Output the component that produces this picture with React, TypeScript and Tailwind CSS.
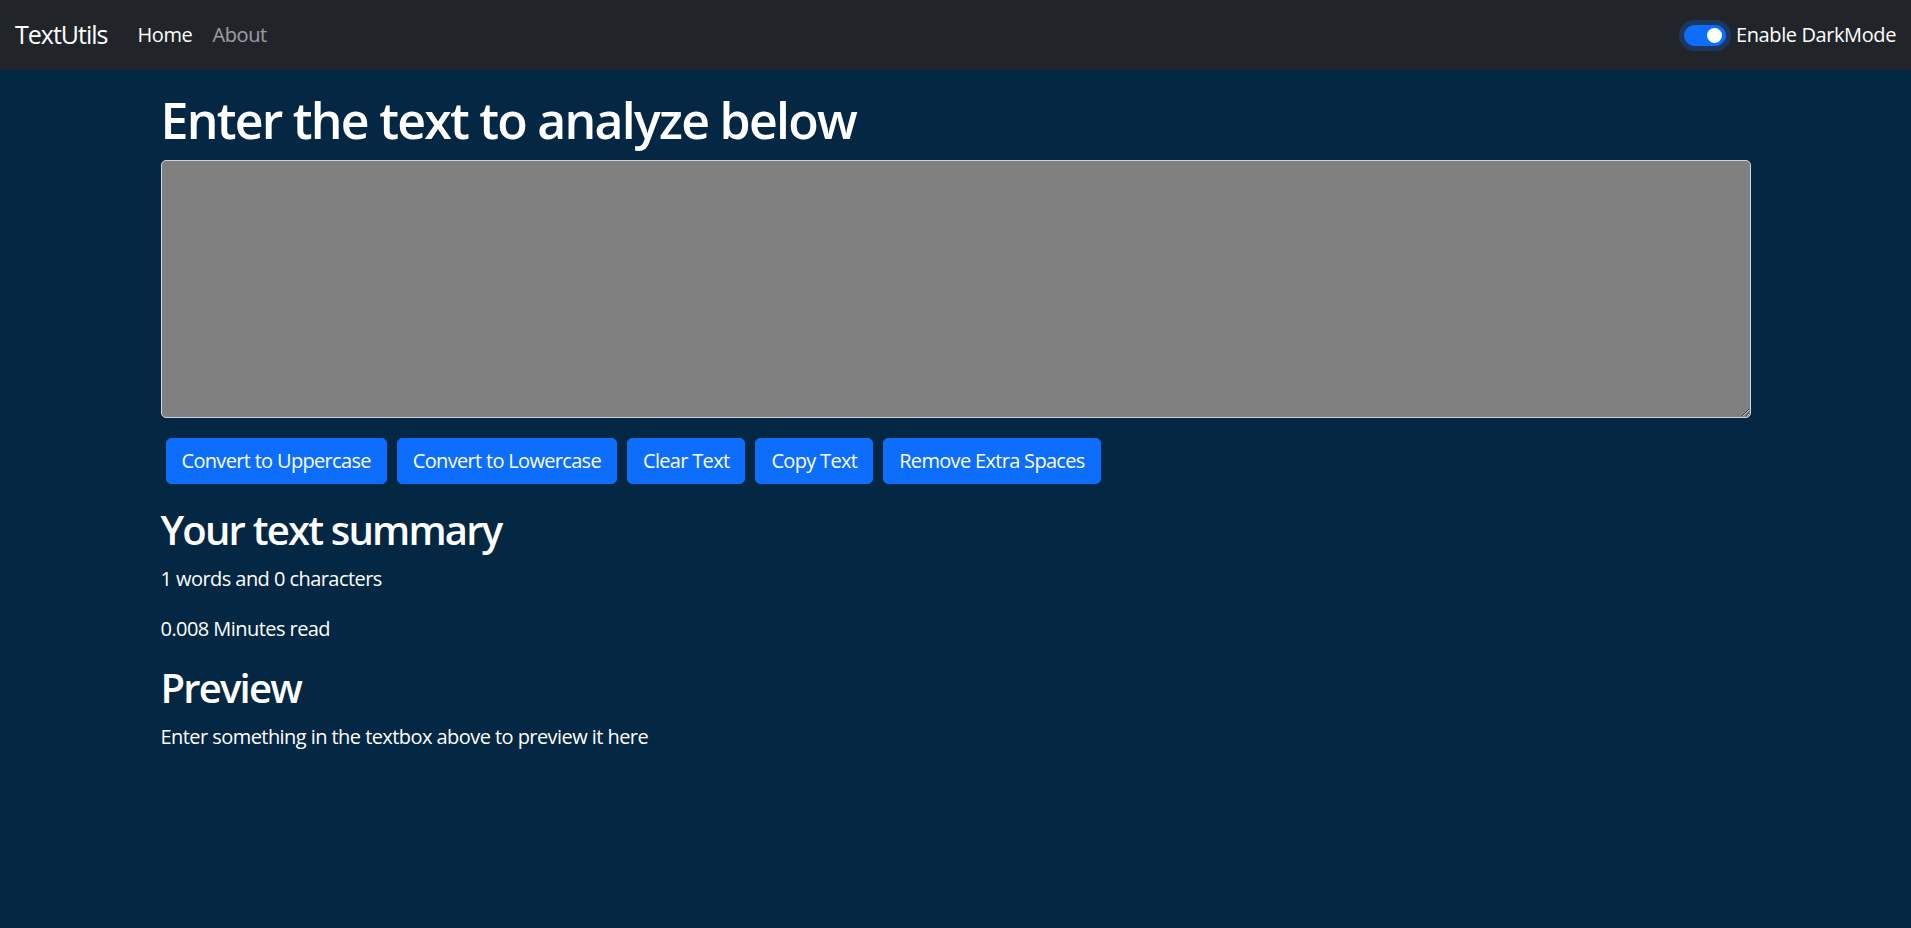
import React, { useState } from 'react';

const buttons = ['Convert to Uppercase', 'Convert to Lowercase', 'Clear Text', 'Copy Text', 'Remove Extra Spaces'];

export default function App() {
  const [text, setText] = useState('');

  const words = text.split(' ').length;

  return (
    <div className="min-h-screen bg-[#042743] text-white font-['Open_Sans','Noto_Sans',sans-serif]">
      <nav className="h-[70px] bg-[#212529] flex items-center justify-between px-[15px] tracking-[-0.025em]">
        <div className="flex items-center">
          <span className="text-[25px] leading-[37.5px] py-[6.25px] mr-[20px] tracking-[-0.04em]">TextUtils</span>
          <a className="text-[20px] leading-[30px] px-[10px] py-[10px] text-white">Home</a>
          <a className="text-[20px] leading-[30px] px-[10px] py-[10px] text-white/55">About</a>
        </div>
        <div className="flex items-center gap-[10px]">
          <span className="ml-[3px] w-[42px] h-[21px] rounded-full bg-[#0d6efd] border border-[#0d6efd] shadow-[0_0_0_5px_rgba(13,110,253,0.25)] flex items-center justify-end pr-[3px]">
            <span className="w-[15px] h-[15px] rounded-full bg-white" />
          </span>
          <span className="text-[20px] leading-[30px]">Enable DarkMode</span>
        </div>
      </nav>

      <div className="max-w-[1650px] mx-auto px-[15px] mt-[20px] tracking-[-0.035em]">
        <div className="px-[15px]">
          <h1 className="text-[50px] leading-[60px] font-semibold tracking-[-0.035em] mb-[10px]">Enter the text to analyze below</h1>
          <textarea
            value={text}
            onChange={(e) => setText(e.target.value)}
            className="block w-full h-[258px] bg-[#808080] text-white border border-[#ced4da] rounded-[5px] px-[15px] py-[7.5px] text-[20px] mb-[20px] outline-none"
          />
          <div className="flex">
            {buttons.map((b) => (
              <button
                key={b}
                className="mx-[5px] bg-[#0d6efd] border border-[#0d6efd] rounded-[5px] px-[15px] py-[7px] text-[20px] leading-[30px] tracking-[-0.034em] text-white"
              >
                {b}
              </button>
            ))}
          </div>
        </div>
      </div>

      <div className="max-w-[1650px] mx-auto px-[15px] mt-[22px] tracking-[-0.035em]">
        <div className="px-[15px]">
          <h2 className="text-[40px] leading-[48px] font-semibold tracking-[-0.045em] mb-[10px]">Your text summary</h2>
          <p className="text-[20px] leading-[30px] mb-[20px]">{words} words and {text.length} characters</p>
          <p className="text-[20px] leading-[30px] mb-[20px]">{(0.008 * words).toString()} Minutes read</p>
          <h2 className="text-[40px] leading-[48px] font-semibold tracking-[-0.045em] mb-[10px]">Preview</h2>
          <p className="text-[20px] leading-[30px]">
            {text.length > 0 ? text : 'Enter something in the textbox above to preview it here'}
          </p>
        </div>
      </div>
    </div>
  );
}
